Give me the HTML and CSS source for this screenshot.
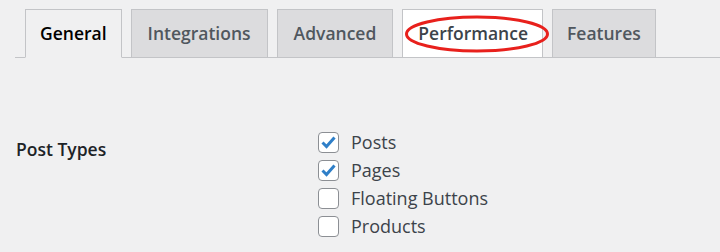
FILE: index.html
```html
<!DOCTYPE html>
<html lang="en">
<head>
<meta charset="UTF-8">
<title>Settings</title>
<link rel="stylesheet" href="styles.css">
</head>
<body>
<div class="wrap">
    <nav class="nav-tabs">
        <a class="nav-tab active">General</a>
        <a class="nav-tab">Integrations</a>
        <a class="nav-tab">Advanced</a>
        <a class="nav-tab hover">Performance
            <svg class="mark" width="146" height="38" viewBox="0 0 146 38">
                <ellipse cx="73" cy="19" rx="70.5" ry="17" fill="none" stroke="#e8201c" stroke-width="3"/>
            </svg>
        </a>
        <a class="nav-tab narrow">Features</a>
    </nav>

    <div class="form-row">
        <div class="row-label">Post Types</div>
        <ul class="check-list">
            <li><span class="box checked"><svg width="15" height="13" viewBox="0 0 15 13"><path d="M1.5 6.5 L5.5 10.5 L13.5 1.5" fill="none" stroke="#2f7fc8" stroke-width="3"/></svg></span>Posts</li>
            <li><span class="box checked"><svg width="15" height="13" viewBox="0 0 15 13"><path d="M1.5 6.5 L5.5 10.5 L13.5 1.5" fill="none" stroke="#2f7fc8" stroke-width="3"/></svg></span>Pages</li>
            <li><span class="box"></span>Floating Buttons</li>
            <li><span class="box"></span>Products</li>
        </ul>
    </div>
</div>
</body>
</html>
```

FILE: styles.css
```css
body {
    margin: 0;
    background-color: #f0f0f1;
    font-family: "Open Sans", "Noto Sans", sans-serif;
    color: #1d2327;
}

.nav-tabs {
    display: flex;
    gap: 9px;
    margin: 9px 0 0 15px;
    padding-left: 10px;
    border-bottom: 1px solid #c3c4c7;
}

.nav-tab {
    position: relative;
    display: block;
    height: 47px;
    line-height: 47px;
    padding: 0 16px;
    margin-bottom: -1px;
    border: 1px solid #c3c4c7;
    border-bottom: 1px solid #c3c4c7;
    background-color: #dcdcde;
    color: #50575e;
    font-size: 17.5px;
    font-weight: 600;
    white-space: nowrap;
}

.nav-tab.narrow {
    padding: 0 14px;
}

.nav-tab.active {
    padding: 0 14px;
    background-color: #f0f0f1;
    border-bottom-color: #f0f0f1;
    color: #000;
}

.nav-tab.hover {
    padding: 0 14px 0 15px;
    background-color: #fff;
    color: #3c434a;
}

.mark {
    position: absolute;
    left: 1px;
    top: 5px;
}

.form-row {
    display: grid;
    grid-template-columns: 302px auto;
    padding: 70px 0 0 16px;
}

.row-label {
    font-size: 17.5px;
    font-weight: 600;
    line-height: 20px;
    padding-top: 11px;
}

.check-list {
    list-style-type: none;
    margin: 0;
    padding: 0;
}

.check-list li {
    display: flex;
    align-items: center;
    height: 28px;
    font-size: 18px;
    color: #3c434a;
}

.box {
    display: flex;
    align-items: center;
    justify-content: center;
    box-sizing: border-box;
    width: 21px;
    height: 21px;
    margin-right: 12px;
    border: 1px solid #8c8f94;
    border-radius: 4px;
    background-color: #fff;
}
```
